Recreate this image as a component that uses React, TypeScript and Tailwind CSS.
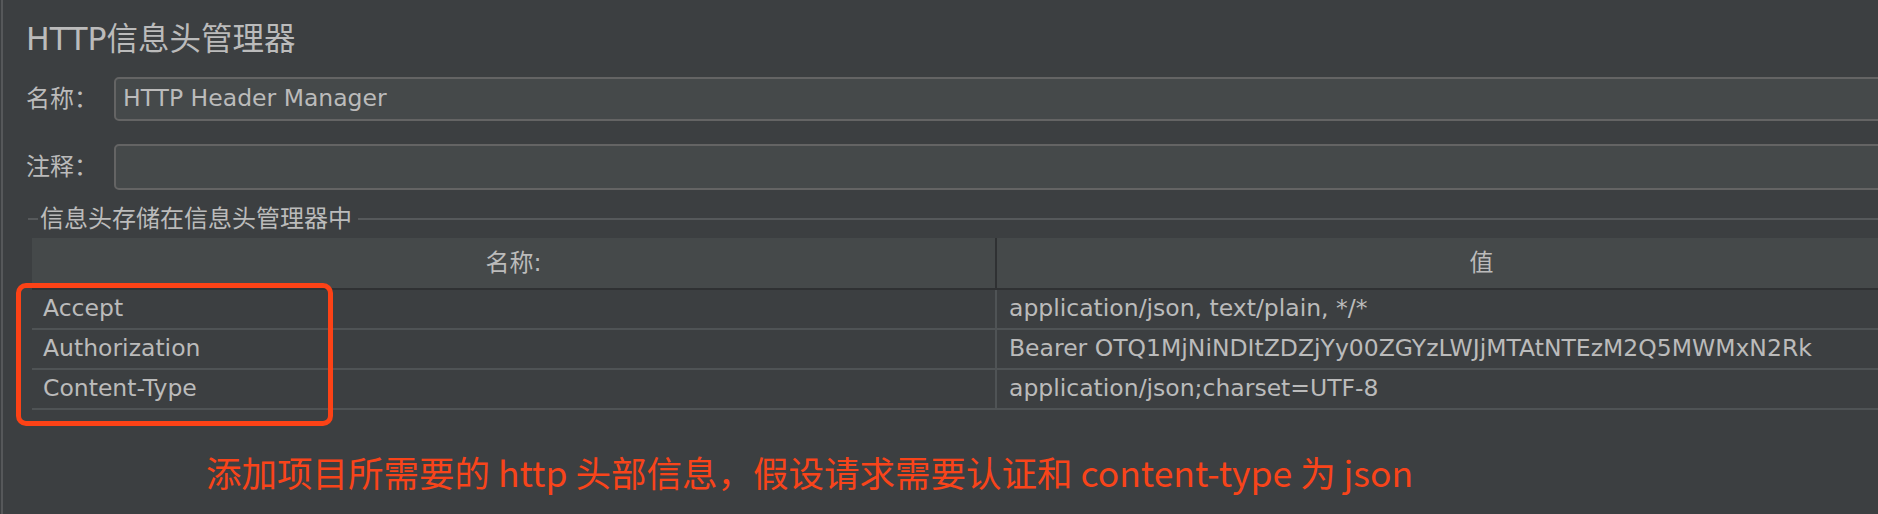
import React from "react";

const uiFont = {
  fontFamily: '"DejaVu Sans", "Noto Sans CJK SC", sans-serif',
};

const headers = [
  { name: "Accept", value: "application/json, text/plain, */*" },
  {
    name: "Authorization",
    value: "Bearer OTQ1MjNiNDItZDZjYy00ZGYzLWJjMTAtNTEzM2Q5MWMxN2Rk",
  },
  { name: "Content-Type", value: "application/json;charset=UTF-8" },
];

const Field = ({ label, value, className }: { label: string; value?: string; className: string }) => (
  <div className={`flex items-stretch pl-[23px] w-[1920px] ${className}`}>
    <div className="w-[88px] flex items-center text-[24px]">{label}</div>
    <div className="flex-1 flex items-center rounded-[5px] border-2 border-[#646464] bg-[#45494a] pl-[7px] text-[23.5px]">
      {value}
    </div>
  </div>
);

export default function App() {
  return (
    <div className="w-[1878px] h-[514px] overflow-hidden bg-[#3c3f41]">
      <div
        className="relative h-full ml-[1px] border-l-2 border-[#56585a] text-[#bbbbbb]"
        style={uiFont}
      >
        {/* 标题 */}
        <div className="h-[77px] pt-[2px] pl-[23px] flex items-center text-[31.5px] leading-none">
          HTTP信息头管理器
        </div>

        <Field label="名称：" value="HTTP Header Manager" className="h-[44px]" />
        <Field label="注释：" className="h-[46px] mt-[23px]" />

        {/* 分组标题 */}
        <div className="h-[48px] pt-[10px] pl-[25px] flex items-center">
          <div className="w-[10px] h-[2px] bg-[#56595b]" />
          <span className="px-[2px] text-[24px] leading-none">信息头存储在信息头管理器中</span>
          <div className="flex-1 h-[2px] bg-[#56595b] ml-[4px]" />
        </div>

        {/* 表格 */}
        <div className="ml-[29px] w-[1934px] text-[23.5px]">
          <div className="flex h-[52px] bg-[#45494a] border-b-2 border-[#2f3133] text-[24px]">
            <div className="w-[963px] flex items-center justify-center">名称:</div>
            <div className="w-[2px] bg-[#2f3133]" />
            <div className="flex-1 flex items-center justify-center">值</div>
          </div>
          {headers.map((h) => (
            <div key={h.name} className="flex h-[40px] border-b-2 border-[#4f5355]">
              <div className="w-[963px] flex items-center pl-[11px]">{h.name}</div>
              <div className="w-[2px] bg-[#4f5355]" />
              <div className="flex-1 flex items-center pl-[12px]">{h.value}</div>
            </div>
          ))}
        </div>

        {/* 说明文字 */}
        <div
          className="mt-[44px] pl-[203px] text-[35.5px] leading-none text-[#f8441a] whitespace-nowrap"
          style={{ fontFamily: '"Noto Sans CJK SC", "Noto Sans", sans-serif' }}
        >
          添加项目所需要的 http 头部信息，假设请求需要认证和 content-type 为 json
        </div>

        {/* 红框标注 */}
        <div className="absolute left-[13px] top-[283px] w-[317px] h-[143px] border-[5px] border-[#fc4216] rounded-[10px]" />
      </div>
    </div>
  );
}
